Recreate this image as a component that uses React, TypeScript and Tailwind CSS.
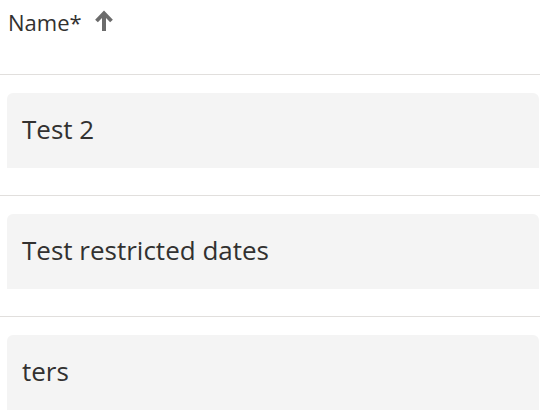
import React from "react";

const rows = ["Test 2", "Test restricted dates", "ters"];

function SortUpIcon() {
  return (
    <svg width="20" height="21" viewBox="0 0 20 21" className="shrink-0 text-[#6b6b6b] -mt-[3px]" fill="none" stroke="currentColor">
      <path d="M10 3 L10 21" strokeWidth="4" />
      <path d="M2.5 11 L10 3.2 L17.5 11" strokeWidth="3.8" strokeLinejoin="miter" />
    </svg>
  );
}

export default function App() {
  return (
    <div className="w-[540px] h-[420px] overflow-hidden bg-white text-[#323130] font-['Open_Sans',sans-serif]">
      {/* Header */}
      <div className="h-[75px] border-b border-[#e1dfdd] pl-[8px] pt-[6px]">
        <div className="flex items-center gap-[12px] h-[32px]">
          <span className="text-[22px] leading-[32px]">Name*</span>
          <SortUpIcon />
        </div>
      </div>

      {rows.map((r) => (
        <div key={r} className="pt-[18px] pb-[27px] border-b border-[#e1dfdd]">
          <div className="ml-[7px] mr-[1px] h-[75px] rounded-t-[6px] bg-[#f4f4f4] flex items-center px-[15px] pb-[3px]">
            <span className="text-[26px] leading-[32px]">{r}</span>
          </div>
        </div>
      ))}
    </div>
  );
}
